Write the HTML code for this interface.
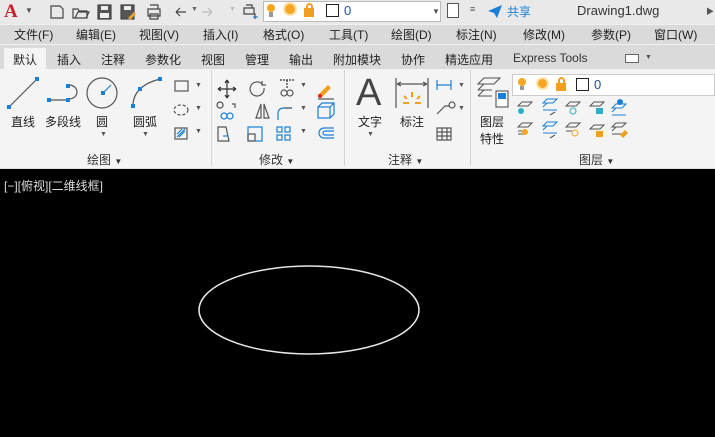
<!DOCTYPE html><html><head><meta charset="utf-8"><style>
*{margin:0;padding:0;box-sizing:border-box}
body{width:715px;height:437px;overflow:hidden;background:#000;font-family:"Liberation Sans","Noto Sans CJK SC",sans-serif;font-size:12px;color:#222;position:relative}
.a{position:absolute;white-space:nowrap}
#top{left:0;top:0;width:715px;height:24px;background:#e9e9e9}
#menu{left:0;top:24px;width:715px;height:20px;background:#dadada;border-top:1px solid #f0f0f0}
#tabs{left:0;top:44px;width:715px;height:25px;background:#dadada;border-top:1px solid #f2f2f2}
#panel{left:0;top:69px;width:715px;height:100px;background:#f4f4f4;border-bottom:1px solid #ddd}
.m{top:26px;font-size:12px;color:#222}
.t{top:51px;font-size:12px;color:#222}
.lbl{font-size:12px;color:#222}
.sep{top:70px;width:1px;height:96px;background:#d4d4d4}
.sm{font-size:12px;color:#333}
.ic{position:absolute}
</style></head><body>
<div class="a" id="top"></div>
<div class="a" id="menu"></div>
<div class="a" id="tabs"></div>
<div class="a" id="panel"></div>
<!-- title bar -->
<div class="a" style="left:4px;top:1px;font-size:19px;font-weight:bold;color:#c8202a;font-family:'Liberation Serif',serif">A</div>
<div class="a" style="left:25px;top:6px;font-size:8px;color:#555">▼</div>
<svg class="ic" style="left:48px;top:3px" width="220" height="18" viewBox="0 0 220 18" fill="none" stroke="#444" stroke-width="1.2">
<path d="M3 3h9l3 3v9H3z"/>
<path d="M25 6h5l1 2h8v7H25zM27 15l3-6h11l-3 6"/>
<rect x="50" y="2" width="13" height="14" fill="#555"/><rect x="53" y="3" width="7" height="4" fill="#eee" stroke="none"/><rect x="52" y="10" width="9" height="5" fill="#eee" stroke="none"/>
<rect x="73" y="2" width="13" height="14" fill="#555"/><rect x="76" y="3" width="7" height="4" fill="#eee" stroke="none"/><path d="M80 15l6-6 2 2-6 6z" fill="#e9a030" stroke="none"/>
<path d="M100 6h12v7h-12zM102 2h8v4M102 11h8v5h-8z"/>
<path d="M128 9h10M128 9l4-4M128 9l4 4" /><path d="M154 9h10M164 9l-4-4M164 9l-4 4" stroke="#bbb"/>
<path d="M196 5h10v6h-10zM198 2h6v3M199 11h8v5" /><path d="M205 14h5" stroke="#1a7fd6"/>
</svg>
<div class="a" style="left:191px;top:6px;font-size:7px;color:#666">▼</div>
<div class="a" style="left:229px;top:6px;font-size:7px;color:#bbb">▼</div>
<div class="a" style="left:263px;top:1px;width:178px;height:21px;background:#fff;border:1px solid #bbb"></div>
<div class="a" style="left:267px;top:4px;width:8px;height:8px;border-radius:50%;background:#f5a623"></div>
<div class="a" style="left:269px;top:12px;width:4px;height:5px;background:#999"></div>
<div class="a" style="left:285px;top:4px;width:10px;height:10px;border-radius:50%;background:#f5a623;box-shadow:0 0 0 2px #fde2a8"></div>
<div class="a" style="left:304px;top:8px;width:10px;height:9px;background:#f0a020"></div>
<div class="a" style="left:306px;top:3px;width:7px;height:7px;border:2px solid #f0a020;border-bottom:none;border-radius:4px 4px 0 0"></div>
<div class="a" style="left:326px;top:4px;width:13px;height:13px;border:1px solid #222;background:#fff"></div>
<div class="a" style="left:344px;top:3px;font-size:13px;color:#1a4f9f">0</div>
<div class="a" style="left:432px;top:7px;font-size:8px;color:#555">▼</div>
<div class="a" style="left:447px;top:3px;width:12px;height:15px;border:1.5px solid #555;background:#fff"></div>
<div class="a" style="left:470px;top:4px;font-size:9px;color:#555">≡</div>
<svg class="ic" style="left:487px;top:4px" width="16" height="15"><path d="M1 7L15 1 10 14 7 9z" fill="#1a7fd6"/></svg>
<div class="a" style="left:507px;top:3px;font-size:12px;color:#1a7fd6">共享</div>
<div class="a" style="left:577px;top:3px;font-size:13px;color:#333">Drawing1.dwg</div>
<div class="a" style="left:706px;top:6px;font-size:8px;color:#555">▶</div>
<!-- menu -->
<div class="a m" style="left:14px">文件(F)</div>
<div class="a m" style="left:76px">编辑(E)</div>
<div class="a m" style="left:139px">视图(V)</div>
<div class="a m" style="left:203px">插入(I)</div>
<div class="a m" style="left:263px">格式(O)</div>
<div class="a m" style="left:329px">工具(T)</div>
<div class="a m" style="left:391px">绘图(D)</div>
<div class="a m" style="left:456px">标注(N)</div>
<div class="a m" style="left:523px">修改(M)</div>
<div class="a m" style="left:591px">参数(P)</div>
<div class="a m" style="left:654px">窗口(W)</div>
<!-- tabs -->
<div class="a" style="left:4px;top:48px;width:42px;height:21px;background:#f4f4f4"></div>
<div class="a t" style="left:13px">默认</div>
<div class="a t" style="left:57px">插入</div>
<div class="a t" style="left:101px">注释</div>
<div class="a t" style="left:145px">参数化</div>
<div class="a t" style="left:201px">视图</div>
<div class="a t" style="left:245px">管理</div>
<div class="a t" style="left:289px">输出</div>
<div class="a t" style="left:333px">附加模块</div>
<div class="a t" style="left:401px">协作</div>
<div class="a t" style="left:445px">精选应用</div>
<div class="a t" style="left:513px;color:#333">Express Tools</div>
<div class="a" style="left:625px;top:54px;width:14px;height:9px;border:1px solid #666;background:#fff"></div>
<div class="a" style="left:645px;top:54px;font-size:7px;color:#555">▼</div>
<!-- separators -->
<div class="a sep" style="left:211px"></div>
<div class="a sep" style="left:344px"></div>
<div class="a sep" style="left:470px"></div>
<!-- draw panel icons -->
<svg class="ic" style="left:0;top:70px" width="345" height="75" fill="none" stroke="#555" stroke-width="1.2">
<path d="M9 37L37 9"/><rect x="7" y="35" width="4" height="4" fill="#1a7fd6" stroke="none"/><rect x="35" y="7" width="4" height="4" fill="#1a7fd6" stroke="none"/>
<path d="M49 30h20M69 15a8 7 0 0 1 0 14"/><rect x="47" y="28" width="4" height="4" fill="#1a7fd6" stroke="none"/><rect x="66" y="28" width="4" height="4" fill="#1a7fd6" stroke="none"/><rect x="66" y="14" width="4" height="4" fill="#1a7fd6" stroke="none"/>
<circle cx="102" cy="23" r="15"/><path d="M103 23l8-8" stroke="#1a7fd6"/><rect x="101" y="21" width="4" height="4" fill="#1a7fd6" stroke="none"/>
<path d="M133 36q0-20 27-27"/><rect x="131" y="34" width="4" height="4" fill="#1a7fd6" stroke="none"/><rect x="138" y="17" width="4" height="4" fill="#1a7fd6" stroke="none"/><rect x="158" y="7" width="4" height="4" fill="#1a7fd6" stroke="none"/>
<rect x="175" y="11" width="13" height="10"/><ellipse cx="181" cy="40" rx="7" ry="5" stroke-dasharray="3 2"/><rect x="175" y="58" width="12" height="11"/><path d="M177 67l8-8M179 67l6-6M177 64l5-5" stroke="#1a7fd6"/>
<path d="M227 10v18M218 19h18M227 10l-2 3M227 10l2 3M227 28l-2-3M227 28l2-3M218 19l3-2M218 19l3 2M236 19l-3-2M236 19l-3 2" stroke="#333"/>
<path d="M262 14a7 7 0 1 0 2 4M262 11v4h4"/>
<path d="M280 10h14M287 10v9" stroke="#333" stroke-dasharray="2 1"/><circle cx="284" cy="23" r="3"/><circle cx="290" cy="23" r="3"/>
<path d="M318 25l10-10 3 3-10 10z" fill="#f0a020" stroke="none"/><circle cx="320" cy="26" r="2" fill="#e22" stroke="none"/><path d="M318 29h16"/>
<path d="M220 32a3 3 0 1 0 0.1 0M232 34h3v4" /><circle cx="224" cy="46" r="3" stroke="#1a7fd6"/><circle cx="230" cy="46" r="3" stroke="#1a7fd6"/>
<path d="M256 48l5-14v14zM264 34v14h5z"/>
<path d="M278 50v-6q0-6 6-6h8" stroke="#1a7fd6"/><path d="M284 38h8"/>
<rect x="318" y="37" width="12" height="11" stroke="#1a7fd6"/><path d="M318 37l4-4h12v11l-4 4M330 37l4-4" stroke="#1a7fd6"/>
<path d="M218 57h8l3 14h-11z"/><path d="M223 66h5" stroke="#1a7fd6"/>
<rect x="248" y="57" width="14" height="14" stroke="#1a7fd6"/><rect x="248" y="64" width="7" height="7"/>
<rect x="277" y="57" width="5" height="5" stroke="#1a7fd6"/><rect x="285" y="57" width="5" height="5" stroke="#1a7fd6"/><rect x="277" y="65" width="5" height="5" stroke="#1a7fd6"/><rect x="285" y="65" width="5" height="5" stroke="#1a7fd6"/>
<path d="M334 58h-10a5 5 0 0 0 0 10h10M334 61h-9a2 2 0 0 0 0 4h9" stroke="#1a7fd6"/>
</svg>
<div class="a" style="left:195px;top:82px;font-size:7px;color:#555">▼</div>
<div class="a" style="left:195px;top:105px;font-size:7px;color:#555">▼</div>
<div class="a" style="left:195px;top:128px;font-size:7px;color:#555">▼</div>
<div class="a" style="left:300px;top:82px;font-size:7px;color:#555">▼</div>
<div class="a" style="left:300px;top:105px;font-size:7px;color:#555">▼</div>
<div class="a" style="left:300px;top:128px;font-size:7px;color:#555">▼</div>
<div class="a lbl" style="left:11px;top:113px">直线</div>
<div class="a lbl" style="left:45px;top:113px">多段线</div>
<div class="a lbl" style="left:96px;top:113px">圆</div>
<div class="a lbl" style="left:133px;top:113px">圆弧</div>
<div class="a" style="left:100px;top:131px;font-size:7px;color:#555">▼</div>
<div class="a" style="left:142px;top:131px;font-size:7px;color:#555">▼</div>
<div class="a lbl" style="left:87px;top:151px;color:#333">绘图 <span style="font-size:8px">▼</span></div>
<div class="a lbl" style="left:259px;top:151px;color:#333">修改 <span style="font-size:8px">▼</span></div>
<!-- annotate -->
<div class="a" style="left:356px;top:72px;font-size:38px;color:#444;font-family:'Liberation Sans',sans-serif">A</div>
<div class="a lbl" style="left:358px;top:113px">文字</div>
<div class="a" style="left:367px;top:131px;font-size:7px;color:#555">▼</div>
<svg class="ic" style="left:395px;top:76px" width="80" height="70" fill="none" stroke="#555" stroke-width="1.2">
<path d="M1 2v30M33 2v30M2 8h30M2 8l4-2M2 8l4 2M32 8l-4-2M32 8l-4 2"/>
<path d="M17 16v5M9 20l3 3M25 20l-3 3M8 27h6M20 27h6" stroke="#f0a020" stroke-width="2"/>
<path d="M42 4v10M56 4v10M42 9h14" stroke="#1a7fd6"/>
<path d="M42 38l8-8h4" /><circle cx="57" cy="29" r="3"/>
<rect x="42" y="52" width="14" height="12"/><path d="M42 56h14M42 60h14M47 52v12M52 52v12"/>
</svg>
<div class="a" style="left:458px;top:82px;font-size:7px;color:#555">▼</div>
<div class="a" style="left:458px;top:105px;font-size:7px;color:#555">▼</div>
<div class="a lbl" style="left:400px;top:113px">标注</div>
<div class="a lbl" style="left:388px;top:151px;color:#333">注释 <span style="font-size:8px">▼</span></div>
<!-- layers -->
<svg class="ic" style="left:474px;top:76px" width="40" height="35" fill="none" stroke="#555" stroke-width="1.1">
<path d="M4 8l6-6h16l-6 6zM4 14l6-6M4 20l6-6h4M4 14h14M4 20h14"/>
<rect x="22" y="15" width="12" height="16" fill="#fff"/><rect x="24" y="17" width="8" height="6" fill="#1a7fd6" stroke="none"/>
</svg>
<div class="a lbl" style="left:480px;top:113px">图层</div>
<div class="a lbl" style="left:480px;top:130px">特性</div>
<div class="a" style="left:512px;top:74px;width:203px;height:22px;background:#fff;border:1px solid #ccc"></div>
<div class="a" style="left:518px;top:78px;width:8px;height:8px;border-radius:50%;background:#f5a623"></div>
<div class="a" style="left:520px;top:86px;width:4px;height:4px;background:#999"></div>
<div class="a" style="left:538px;top:79px;width:9px;height:9px;border-radius:50%;background:#f5a623;box-shadow:0 0 0 2px #fde2a8"></div>
<div class="a" style="left:556px;top:83px;width:10px;height:8px;background:#f0a020"></div>
<div class="a" style="left:558px;top:77px;width:7px;height:7px;border:2px solid #f0a020;border-bottom:none;border-radius:4px 4px 0 0"></div>
<div class="a" style="left:576px;top:78px;width:13px;height:13px;border:1px solid #222;background:#fff"></div>
<div class="a" style="left:594px;top:77px;font-size:13px;color:#1a4f9f">0</div>
<svg class="ic" style="left:512px;top:98px" width="120" height="46" fill="none" stroke="#555" stroke-width="1">
<g><path d="M6 8l4-4h10l-4 4z"/><circle cx="9" cy="13" r="3" fill="#2ab0c8" stroke="none"/></g>
<g transform="translate(25,0)"><path d="M6 5l4-4h10l-4 4zM6 9l4-4M6 12h14" stroke="#1a7fd6"/><path d="M18 14l-5 3" stroke="#333"/></g>
<g transform="translate(48,0)"><path d="M6 8l4-4h10l-4 4z"/><circle cx="13" cy="13" r="3" stroke="#2ab0c8"/></g>
<g transform="translate(72,0)"><path d="M6 8l4-4h10l-4 4z"/><rect x="12" y="10" width="7" height="6" fill="#2ab0c8" stroke="none"/></g>
<g transform="translate(96,0)"><path d="M4 10l4-4h10l-4 4zM4 14l4-4M4 17h14" stroke="#1a7fd6"/><circle cx="12" cy="4" r="3" fill="#1a7fd6" stroke="none"/></g>
<g transform="translate(0,23)"><path d="M6 6l4-4h10l-4 4zM6 10h8M6 13h8"/><circle cx="13" cy="11" r="3" fill="#f5a623" stroke="none"/></g>
<g transform="translate(25,23)"><path d="M6 5l4-4h10l-4 4zM6 9l4-4M6 12h14" stroke="#1a7fd6"/><path d="M13 17l5-3" stroke="#333"/></g>
<g transform="translate(48,23)"><path d="M6 6l4-4h10l-4 4zM6 10h6"/><circle cx="15" cy="12" r="3" stroke="#f5a623"/></g>
<g transform="translate(72,23)"><path d="M6 8l4-4h10l-4 4z"/><rect x="12" y="10" width="7" height="6" fill="#f0a020" stroke="none"/></g>
<g transform="translate(96,23)"><path d="M4 6l4-4h10l-4 4zM4 10l4-4M4 13h10"/><path d="M12 14l5-5 3 3-5 5z" fill="#f0a020" stroke="none"/></g>
</svg>
<div class="a lbl" style="left:579px;top:151px;color:#333">图层 <span style="font-size:8px">▼</span></div>
<!-- viewport -->
<div class="a" style="left:4px;top:177px;font-size:12px;color:#ddd">[−][俯视][二维线框]</div>
<svg class="ic" style="left:0;top:0" width="715" height="437"><ellipse cx="309" cy="310" rx="110" ry="44" fill="none" stroke="#e6e6e6" stroke-width="1.5"/></svg>
</body></html>
